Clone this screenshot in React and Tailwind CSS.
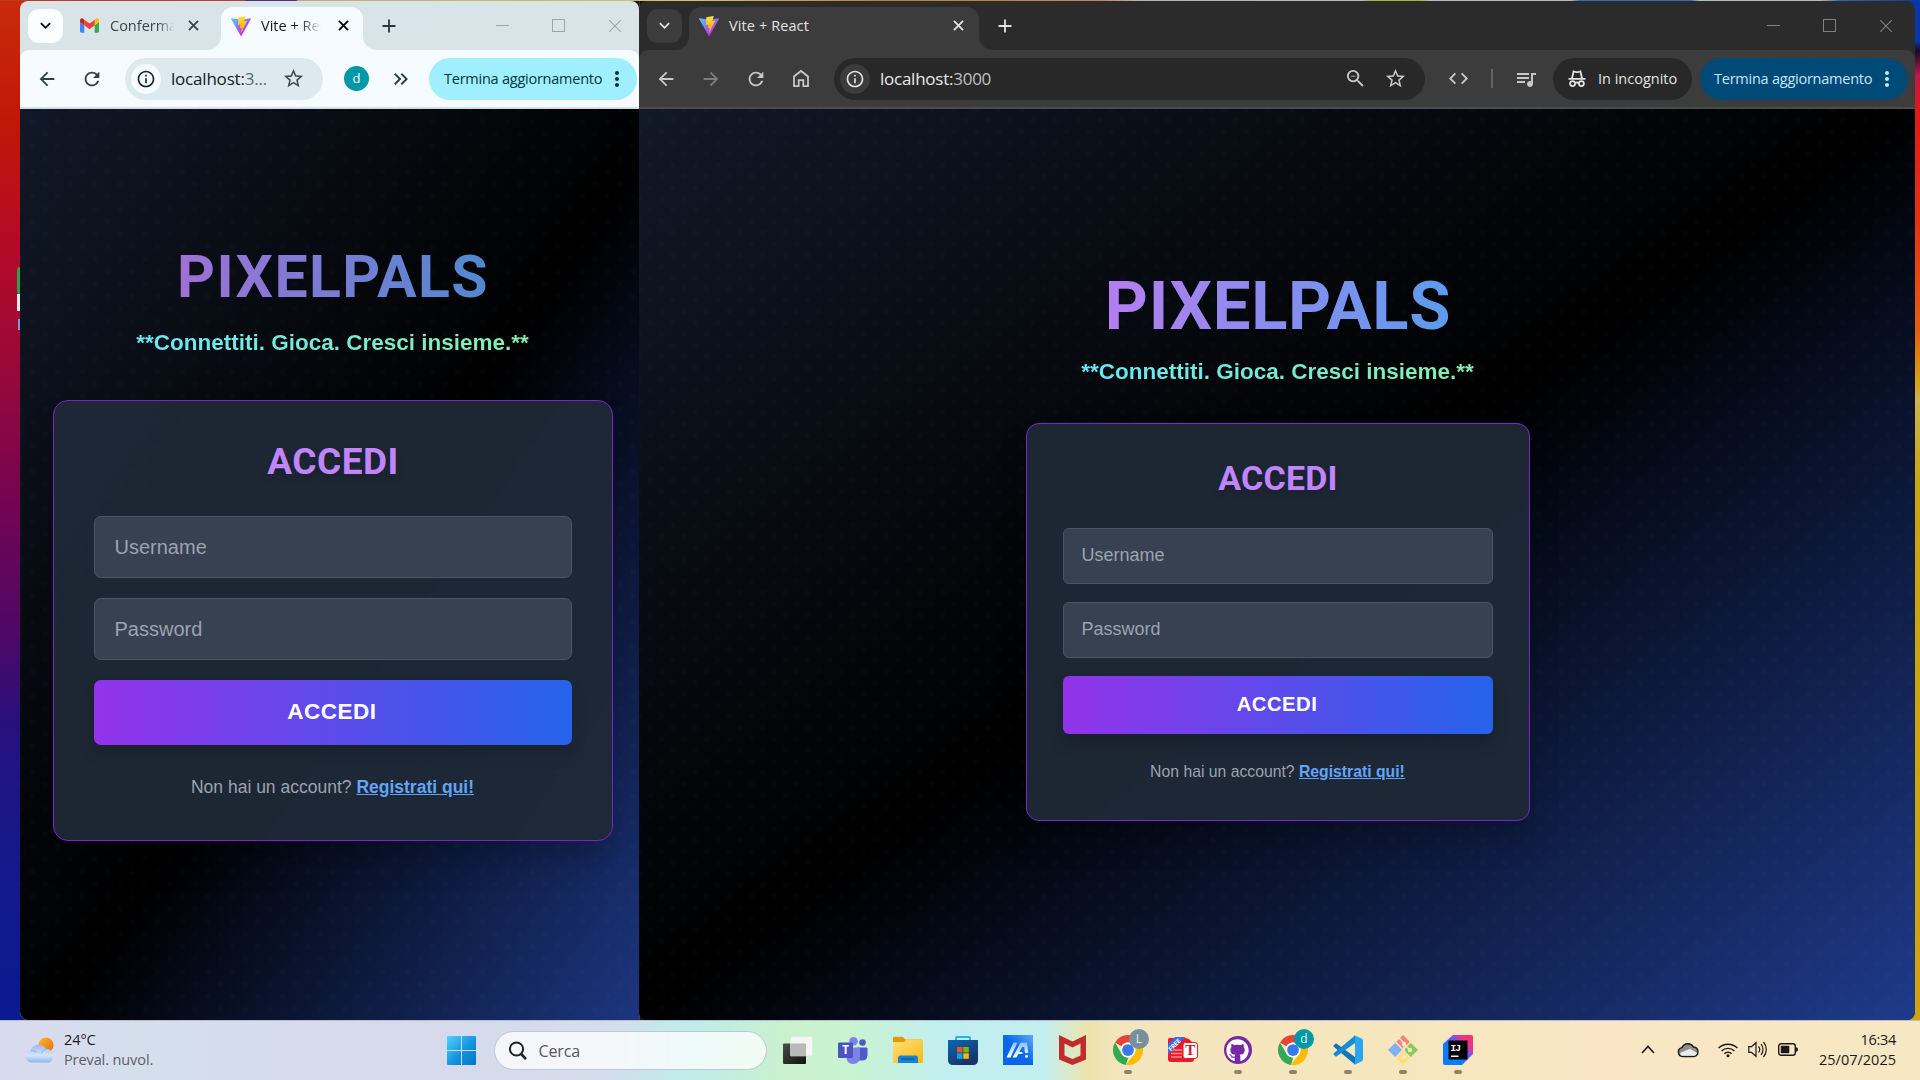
import React from "react";
import {
  MdArrowBack,
  MdArrowForward,
  MdRefresh,
  MdStarBorder,
  MdInfoOutline,
  MdZoomOut,
  MdCode,
  MdQueueMusic,
  MdKeyboardArrowDown,
  MdKeyboardDoubleArrowRight,
  MdMoreVert,
} from "react-icons/md";
import { FaGithub } from "react-icons/fa";

const ui = "font-['Open_Sans','Noto_Sans',sans-serif]";

/* ---------- small helpers ---------- */

function Slot({ className = "", children }) {
  return (
    <span className={`flex shrink-0 items-center justify-center ${className}`}>
      {children}
    </span>
  );
}

function Cross({ size = 11, width = 2 }) {
  return (
    <svg className="shrink-0" width={size} height={size} viewBox="0 0 12 12" fill="none" stroke="currentColor" strokeWidth={width}>
      <path d="M1 1L11 11M11 1L1 11" />
    </svg>
  );
}

function Plus() {
  return (
    <svg className="shrink-0" width="14" height="14" viewBox="0 0 14 14" stroke="currentColor" strokeWidth="1.8">
      <path d="M7 0.5V13.5M0.5 7H13.5" />
    </svg>
  );
}

function ViteLogo() {
  return (
    <svg className="shrink-0" width="20" height="20" viewBox="0 0 256 257">
      <defs>
        <linearGradient id="viteA" x1="-1%" x2="58%" y1="8%" y2="79%">
          <stop offset="0%" stopColor="#41D1FF" />
          <stop offset="100%" stopColor="#BD34FE" />
        </linearGradient>
        <linearGradient id="viteB" x1="43%" x2="50%" y1="2%" y2="89%">
          <stop offset="0%" stopColor="#FFEA83" />
          <stop offset="8%" stopColor="#FFDD35" />
          <stop offset="100%" stopColor="#FFA800" />
        </linearGradient>
      </defs>
      <path fill="url(#viteA)" d="M255.2 37.9L134.9 252.9c-2.5 4.4-8.8 4.5-11.3 0L.9 37.9c-2.7-4.8 1.4-10.6 6.8-9.7l120.4 21.5c.8.1 1.5.1 2.3 0l117.9-21.5c5.4-1 9.6 4.8 6.9 9.7z" />
      <path fill="url(#viteB)" d="M185.4 0L96.4 17.5c-1.4.3-2.5 1.5-2.6 3L88.4 113c-.1 2.2 1.9 3.9 4 3.4l24.8-5.7c2.3-.5 4.4 1.5 3.9 3.8l-7.4 36c-.5 2.4 1.8 4.5 4.2 3.8l15.3-4.7c2.4-.7 4.6 1.4 4.1 3.8l-11.7 56.6c-.7 3.5 4 5.5 5.9 2.5l1.3-2 72.5-144.7c1.2-2.4-.9-5.2-3.5-4.7l-25.5 4.9c-2.4.5-4.4-1.8-3.8-4.1l16.6-57.7c.7-2.3-1.4-4.6-3.7-4.1z" />
    </svg>
  );
}

function GmailLogo() {
  return (
    <svg className="shrink-0" width="19" height="15" viewBox="52 42 88 66">
      <path fill="#4285f4" d="M58 108h14V74L52 59v43c0 3.32 2.69 6 6 6" />
      <path fill="#34a853" d="M120 108h14c3.32 0 6-2.69 6-6V59l-20 15" />
      <path fill="#fbbc04" d="M120 48v26l20-15v-8c0-7.42-8.47-11.65-14.4-7.2" />
      <path fill="#ea4335" d="M72 74V48l24 18 24-18v26L96 92" />
      <path fill="#c5221f" d="M52 51v8l20 15V48l-5.6-4.2c-5.94-4.45-14.4-.22-14.4 7.2" />
    </svg>
  );
}

function WindowButtons({ gapClass }) {
  return (
    <div className={`flex items-center opacity-80 ${gapClass}`}>
      <span className="block h-px w-[13px] bg-current" />
      <span className="block size-[13px] border border-current" />
      <Cross size={14} width={0.9} />
    </div>
  );
}

/* Concave corner at the foot of the active tab. */
function TabFoot({ side, dark }) {
  const fill = dark ? "#3c3c3c" : "#f5fbfe";
  return (
    <svg
      className={`absolute bottom-0 ${side === "left" ? "-left-[14px]" : "-right-[14px]"}`}
      width="14"
      height="14"
      viewBox="0 0 14 14"
    >
      {side === "left" ? (
        <path fill={fill} d="M14 0V14H0A14 14 0 0 0 14 0Z" />
      ) : (
        <path fill={fill} d="M0 0V14H14A14 14 0 0 1 0 0Z" />
      )}
    </svg>
  );
}

function Incognito() {
  return (
    <svg className="shrink-0" width="20" height="20" viewBox="0 0 20 20" fill="none" stroke="currentColor" strokeWidth="1.8">
      <path d="M1.5 9.8H18.5" />
      <path d="M5 9.5L6.6 2.4L8.6 3Q10 3.4 11.4 3L13.4 2.4L15 9.5" />
      <circle cx="5.6" cy="14.6" r="2.5" />
      <circle cx="14.4" cy="14.6" r="2.5" />
      <path d="M8 14Q10 13 12 14" />
    </svg>
  );
}

function HomeIcon() {
  return (
    <svg className="shrink-0" width="18" height="19" viewBox="0 0 18 19" fill="none" stroke="currentColor" strokeWidth="1.8">
      <path d="M2 7.5L9 2L16 7.5V17.2H11.3V11.2H6.7V17.2H2Z" />
    </svg>
  );
}

/* ---------- PixelPals page ---------- */

const FIELD =
  "flex items-center border border-[#4b5563] bg-[#374151] pb-px text-[#9ca3af]";

function Page({ small, children }) {
  return (
    <div
      className={`relative flex-1 bg-linear-to-br/srgb from-[#111827] via-black font-['Liberation_Sans',Arial,sans-serif] ${
        small ? "via-53% to-[#1e3a8a] to-104%" : "to-[#1e3a8a]"
      }`}
    >
      <div
        className={`h-full bg-[radial-gradient(circle,rgba(255,255,255,0.012)_2.5px,transparent_3.5px),radial-gradient(circle,rgba(255,255,255,0.012)_2.5px,transparent_3.5px)] ${
          small
            ? "bg-size-[25px_25px] bg-position-[0_0,12.5px_12.5px]"
            : "bg-size-[22.5px_22.5px] bg-position-[0_0,11.25px_11.25px]"
        }`}
      >
        {children}
      </div>
    </div>
  );
}

function LeftPage() {
  return (
    <Page small>
      <div className="flex flex-col items-center pt-[131px] pl-[7px]">
        <h1 className="h-[74px] bg-linear-to-r/srgb from-[#c084fc] to-[#60a5fa] bg-clip-text px-1 font-['Roboto',sans-serif] text-[59px] leading-[74px] font-bold tracking-[1.4px] text-transparent opacity-83">
          PIXELPALS
        </h1>
        <p className="mt-[11px] mr-px bg-linear-to-r/srgb from-[#67e8f9] to-[#86efac] bg-clip-text text-[22.5px] leading-[35px] font-bold whitespace-nowrap text-transparent">
          **Connettiti. Gioca. Cresci insieme.**
        </p>
        <div className="mt-10 flex h-[441px] w-[560px] flex-col rounded-[15px] border border-[#7e22ce] bg-[#1f2937]/95 px-[40px] pt-[38px] shadow-[0_20px_30px_rgba(0,0,0,0.2)]">
          <h2 className="h-[46px] text-center font-['Roboto',sans-serif] text-[37px] leading-[46px] font-bold tracking-[0.5px] text-[#c084fc] [text-shadow:0_4px_6px_rgba(0,0,0,0.2)]">
            ACCEDI
          </h2>
          <div className={`mt-[31px] h-[62px] rounded-[7px] pl-[19.5px] text-[20px] ${FIELD}`}>Username</div>
          <div className={`mt-[20px] h-[62px] rounded-[7px] pl-[19.5px] text-[20px] ${FIELD}`}>Password</div>
          <button className="mt-[20px] h-[65px] rounded-[7px] bg-linear-to-r/srgb from-[#9333ea] to-[#2563eb] pr-[2px] pb-[2px] text-[22.5px] font-bold tracking-[0.5px] text-white shadow-[0_10px_15px_rgba(0,0,0,0.15)]">
            ACCEDI
          </button>
          <p className="mt-[30px] mr-px text-center text-[17.5px] leading-[25px] text-[#9ca3af]">
            Non hai un account?{" "}
            <a className="font-bold text-[#60a5fa] underline">Registrati qui!</a>
          </p>
        </div>
      </div>
    </Page>
  );
}

function RightPage() {
  return (
    <Page>
      <div className="flex flex-col items-center pt-[155px] pl-[2px]">
        <h1 className="h-[84px] bg-linear-to-r/srgb from-[#c084fc] to-[#60a5fa] bg-clip-text px-1 font-['Roboto',sans-serif] text-[67px] leading-[84px] font-bold tracking-[0.7px] text-transparent opacity-95">
          PIXELPALS
        </h1>
        <p className="mt-[6px] mr-px bg-linear-to-r/srgb from-[#67e8f9] to-[#86efac] bg-clip-text text-[22.5px] leading-[35px] font-bold whitespace-nowrap text-transparent">
          **Connettiti. Gioca. Cresci insieme.**
        </p>
        <div className="mt-[34px] flex h-[398px] w-[504px] flex-col rounded-[13px] border border-[#7e22ce] bg-[#1f2937]/95 px-[36px] pt-[34px] shadow-[0_20px_30px_rgba(0,0,0,0.2)]">
          <h2 className="h-[41px] text-center font-['Roboto',sans-serif] text-[34px] leading-[41px] font-bold tracking-[0.2px] text-[#c084fc] [text-shadow:0_4px_6px_rgba(0,0,0,0.2)]">
            ACCEDI
          </h2>
          <div className={`mt-[29px] h-[56px] rounded-[6px] px-[17.5px] text-[18px] ${FIELD}`}>Username</div>
          <div className={`mt-[18px] h-[56px] rounded-[6px] px-[17.5px] text-[18px] ${FIELD}`}>Password</div>
          <button className="mt-[18px] h-[58px] rounded-[6px] bg-linear-to-r/srgb from-[#9333ea] to-[#2563eb] pr-[2px] pb-[2px] text-[20.25px] font-bold tracking-[0.5px] text-white shadow-[0_10px_15px_rgba(0,0,0,0.2)]">
            ACCEDI
          </button>
          <p className="mt-[27px] mr-px text-center text-[15.75px] leading-[22px] text-[#9ca3af]">
            Non hai un account?{" "}
            <a className="font-bold text-[#60a5fa] underline">Registrati qui!</a>
          </p>
        </div>
      </div>
    </Page>
  );
}

/* ---------- browser windows ---------- */

function LeftWindow() {
  return (
    <section className={`flex w-[619px] shrink-0 flex-col overflow-hidden rounded-t-[8px] rounded-bl-[8px] bg-[#d8e4e8] ${ui}`}>
      <div className="flex h-[49px] shrink-0 items-center pl-[8px] text-[15px] text-[#33474d]">
        <Slot className="h-[34px] w-[35px] rounded-[11px] bg-[#fafeff] text-black">
          <MdKeyboardArrowDown size={21} />
        </Slot>
        <Slot className="ml-[17px]"><GmailLogo /></Slot>
        <span className="ml-[11px] w-[64px] overflow-hidden mask-r-from-75% text-[14.5px] whitespace-nowrap">Conferma</span>
        <Slot className="ml-[14px] w-[11px]"><Cross /></Slot>
        <div className="relative ml-[22px] flex h-[43px] w-[142px] items-center self-end rounded-t-[12px] bg-[#f5fbfe] pb-[6px] pl-[10px] text-[#101c20]">
          <TabFoot side="left" />
          <ViteLogo />
          <span className="ml-[10px] w-[60px] overflow-hidden mask-r-from-65% text-[14.5px] whitespace-nowrap">Vite + React</span>
          <Slot className="ml-[17px] w-[11px] text-black"><Cross /></Slot>
          <TabFoot side="right" />
        </div>
        <Slot className="ml-[19px] text-[#26373c]"><Plus /></Slot>
        <div className="ml-[100px] text-[#8c989c]"><WindowButtons gapClass="gap-[43px]" /></div>
      </div>
      <div className="flex h-[59px] shrink-0 items-center rounded-t-[9px] border-b-2 border-[#d3dfe3] bg-[#f5fbfe] pl-[19px] text-[#2d4248]">
        <Slot className="w-4"><MdArrowBack size={22} className="shrink-0" /></Slot>
        <Slot className="ml-[29px] w-4"><MdRefresh size={22} className="shrink-0" /></Slot>
        <div className="ml-[25px] flex h-[42px] w-[198px] shrink-0 items-center rounded-full bg-[#dceaef] pl-[6px]">
          <Slot className="size-[30px] rounded-full bg-[#f5fbfe] text-[#15262b]"><MdInfoOutline size={20} /></Slot>
          <span className="ml-[10px] w-[101px] text-[17px] tracking-[-0.2px] whitespace-nowrap text-[#101c20]">
            localhost:<span className="text-[#5a6a6e]">3...</span>
          </span>
          <Slot className="ml-[12px] w-[19px] text-[#3e4a4e]"><MdStarBorder size={23} className="shrink-0" /></Slot>
        </div>
        <Slot className="ml-[21px] size-[25px] rounded-full bg-[#0097a7] text-[13px] text-white">d</Slot>
        <Slot className="ml-[24px] w-4"><MdKeyboardDoubleArrowRight size={24} className="shrink-0" /></Slot>
        <div className="ml-[20px] flex h-[42px] w-[208px] shrink-0 items-center rounded-full bg-[#a0efff] pl-[15px] text-[#00363f]">
          <span className="w-[158px] text-[14.5px] tracking-[-0.24px] whitespace-nowrap">Termina aggiornamento</span>
          <Slot className="ml-[7px] w-4"><MdMoreVert size={24} className="shrink-0" /></Slot>
        </div>
      </div>
      <LeftPage />
    </section>
  );
}

function RightWindow() {
  return (
    <section className={`flex w-[1276px] shrink-0 flex-col overflow-hidden rounded-[8px] bg-[#2b2b2b] ${ui}`}>
      <div className="flex h-[49px] shrink-0 items-center pl-[8px] text-[#e3e3e3]">
        <Slot className="h-[34px] w-[35px] rounded-[11px] bg-[#3c3c3c]">
          <MdKeyboardArrowDown size={21} />
        </Slot>
        <div className="relative ml-[7px] flex h-[43px] w-[290px] items-center self-end rounded-t-[12px] bg-[#3c3c3c] pb-[6px] pl-[10px]">
          <TabFoot side="left" dark />
          <ViteLogo />
          <span className="ml-[10px] text-[14.5px] tracking-[0.1px] whitespace-nowrap">Vite + React</span>
          <Slot className="mr-[15px] ml-auto w-[11px]"><Cross /></Slot>
          <TabFoot side="right" dark />
        </div>
        <Slot className="ml-[19px]"><Plus /></Slot>
        <div className="mr-[22px] ml-auto text-[#9a9a9a]"><WindowButtons gapClass="gap-[43px]" /></div>
      </div>
      <div className="flex h-[59px] shrink-0 items-center rounded-t-[9px] border-b-2 border-[#4b4d4b] bg-[#3c3c3c] pl-[19px] text-[#c7c7c7]">
        <Slot className="w-4"><MdArrowBack size={22} className="shrink-0" /></Slot>
        <Slot className="ml-[29px] w-4 text-[#7d7d7d]"><MdArrowForward size={22} className="shrink-0" /></Slot>
        <Slot className="ml-[29px] w-4"><MdRefresh size={22} className="shrink-0" /></Slot>
        <Slot className="ml-[29px] w-4"><HomeIcon /></Slot>
        <div className="ml-[25px] flex h-[42px] w-[591px] shrink-0 items-center rounded-full bg-[#282828] pl-[6px]">
          <Slot className="size-[30px] rounded-full bg-[#3c3c3c] text-[#e3e3e3]"><MdInfoOutline size={20} /></Slot>
          <span className="ml-[10px] text-[17px] tracking-[-0.25px] whitespace-nowrap text-[#e8e8e8]">
            localhost:<span className="text-[#c0c0c0]">3000</span>
          </span>
          <Slot className="ml-auto w-5"><MdZoomOut size={23} className="shrink-0" /></Slot>
          <Slot className="mr-5 ml-5 w-5"><MdStarBorder size={23} className="shrink-0" /></Slot>
        </div>
        <Slot className="ml-[23px] w-5"><MdCode size={23} className="shrink-0" /></Slot>
        <span className="ml-[23px] h-[19px] w-[2px] bg-[#636363]" />
        <Slot className="ml-[23px] w-5"><MdQueueMusic size={24} className="shrink-0" /></Slot>
        <div className="ml-[17px] flex h-[42px] w-[139px] shrink-0 items-center rounded-full bg-[#282828] pl-[14px] text-[#e3e3e3]">
          <Incognito />
          <span className="ml-[11px] text-[14.5px] whitespace-nowrap">In incognito</span>
        </div>
        <div className="ml-2 flex h-[42px] w-[208px] shrink-0 items-center rounded-full bg-[#004a77] pl-[14px] text-[#c2e7ff]">
          <span className="w-[158px] text-[14.5px] tracking-[-0.24px] whitespace-nowrap">Termina aggiornamento</span>
          <Slot className="ml-[7px] w-4"><MdMoreVert size={24} className="shrink-0" /></Slot>
        </div>
      </div>
      <RightPage />
    </section>
  );
}

/* ---------- taskbar ---------- */

function WeatherIcon() {
  return (
    <svg className="shrink-0" width="32" height="28" viewBox="0 0 32 28">
      <defs>
        <linearGradient id="sun" x1="0" x2="1" y1="0" y2="1">
          <stop offset="0" stopColor="#f8b830" />
          <stop offset="1" stopColor="#f06a10" />
        </linearGradient>
        <linearGradient id="cloud" x1="0" x2="0" y1="0" y2="1">
          <stop offset="0" stopColor="#9db9ee" />
          <stop offset="0.6" stopColor="#d3e5fb" />
          <stop offset="1" stopColor="#8fb2ee" />
        </linearGradient>
      </defs>
      <circle cx="22" cy="9" r="7.6" fill="url(#sun)" />
      <path fill="url(#cloud)" d="M7 26.5A6 6 0 0 1 6.5 14.7A8.5 8.5 0 0 1 22 13A7 7 0 0 1 25 26.5Z" />
      <path fill="none" stroke="#8fb0ea" strokeWidth="1" d="M6.5 14.7Q10 14 12.5 16M17.5 17.5Q18.5 13.3 23 12.8" />
    </svg>
  );
}

function StartIcon() {
  return (
    <svg className="shrink-0" width="29" height="29" viewBox="0 0 29 29">
      <defs>
        <linearGradient id="start" gradientUnits="userSpaceOnUse" x1="0" y1="0" x2="29" y2="29">
          <stop offset="0" stopColor="#4fd3fb" />
          <stop offset="0.55" stopColor="#1393de" />
          <stop offset="1" stopColor="#0573cf" />
        </linearGradient>
      </defs>
      <path fill="url(#start)" d="M1 0H14V14H0V1Q0 0 1 0ZM15 0H28Q29 0 29 1V14H15ZM0 15H14V29H1Q0 29 0 28ZM15 15H29V28Q29 29 28 29H15Z" />
    </svg>
  );
}

function TaskViewIcon() {
  return (
    <svg width="30" height="28" viewBox="0 0 30 28">
      <defs>
        <linearGradient id="tv" x1="0" y1="0" x2="1" y2="1">
          <stop offset="0" stopColor="#4a4a48" />
          <stop offset="1" stopColor="#111" />
        </linearGradient>
      </defs>
      <rect x="0" y="7.5" width="23" height="20.5" rx="1" fill="url(#tv)" />
      <rect x="7.5" y="0.5" width="22" height="19.5" rx="1" fill="#f4f6f4" stroke="#dfe5df" strokeWidth="0.6" />
      <rect x="7.5" y="7.5" width="15.5" height="12.5" fill="#b9bab8" />
    </svg>
  );
}

function TeamsIcon() {
  return (
    <svg width="30" height="27" viewBox="0 0 30 27">
      <circle cx="24.5" cy="5.5" r="3.3" fill="#5059c9" />
      <path fill="#5059c9" d="M19 10.5H28.5Q29.5 10.5 29.5 11.5V18Q29.5 23.5 24 23.5H19Z" />
      <circle cx="15.5" cy="4.3" r="4.3" fill="#7b83eb" />
      <path fill="#7b83eb" d="M8 10.5H21Q22 10.5 22 11.5V19Q22 27 15 27Q8.5 27 8.5 20Z" />
      <rect x="0" y="5.5" width="15" height="15.5" rx="1.3" fill="#4b53bc" />
      <text x="7.5" y="17.3" textAnchor="middle" fill="#fff" fontFamily="Open Sans, sans-serif" fontWeight="700" fontSize="11.5">T</text>
    </svg>
  );
}

function FolderIcon() {
  return (
    <svg width="30" height="28" viewBox="0 0 30 28">
      <defs>
        <linearGradient id="fold" x1="0" y1="0" x2="1" y2="1">
          <stop offset="0" stopColor="#ffe07a" />
          <stop offset="1" stopColor="#fdb813" />
        </linearGradient>
      </defs>
      <path fill="#e09a0c" d="M0 2Q0 .8 1.2 .8H9.5L12.5 3.5H28V10H0Z" />
      <path fill="url(#fold)" d="M0 6H11L13.5 3.5H28.5Q30 3.5 30 5V26Q30 27 29 27H1Q0 27 0 26Z" />
      <path fill="#1583d6" d="M5 27V22Q5 19.5 7.5 19.5H22.5Q25 19.5 25 22V27Z" />
      <rect x="8.5" y="22.5" width="13" height="1.2" fill="#0a4f94" />
    </svg>
  );
}

function StoreIcon() {
  return (
    <svg width="30" height="30" viewBox="0 0 30 30">
      <defs>
        <linearGradient id="store" x1="0" y1="0" x2="0.6" y2="1">
          <stop offset="0" stopColor="#0b68b5" />
          <stop offset="1" stopColor="#1b3263" />
        </linearGradient>
      </defs>
      <path fill="none" stroke="#22b4ee" strokeWidth="2" d="M8 7V3Q8 2 9 2H21Q22 2 22 3V7" />
      <path fill="url(#store)" d="M0 5H30V25Q30 30 25 30H5Q0 30 0 25Z" />
      <rect x="9" y="12" width="5.5" height="5.5" fill="#f25022" />
      <rect x="15.3" y="12" width="5.5" height="5.5" fill="#7fba00" />
      <rect x="9" y="18.3" width="5.5" height="5.5" fill="#00a4ef" />
      <rect x="15.3" y="18.3" width="5.5" height="5.5" fill="#ffb900" />
    </svg>
  );
}

function AsusIcon() {
  return (
    <svg width="30" height="30" viewBox="0 0 30 30">
      <defs>
        <linearGradient id="asus" x1="0" y1="1" x2="1" y2="0">
          <stop offset="0.5" stopColor="#0668e8" />
          <stop offset="1" stopColor="#5fa8fa" />
        </linearGradient>
        <linearGradient id="asusInk" x1="0" y1="1" x2="0" y2="0">
          <stop offset="0" stopColor="#fff" />
          <stop offset="1" stopColor="#8fbdf9" />
        </linearGradient>
      </defs>
      <rect width="30" height="30" fill="url(#asus)" />
      <path fill="url(#asusInk)" d="M3.5 22.5L10.5 7.5H14.5L7.5 22.5ZM9.5 22.5L17.5 7.5H24L25.3 18H22L21.3 12H19L13.5 22.5Z" />
      <path stroke="#e8f2ff" strokeWidth="2" d="M14.5 18H19.5" />
      <circle cx="23.5" cy="21.3" r="1.5" fill="#fff" />
    </svg>
  );
}

function McAfeeIcon() {
  return (
    <svg width="27" height="30" viewBox="0 0 27 30">
      <path fill="#c02b2c" fillRule="evenodd" d="M0 0L13.5 6.5L27 0V24.5L13.5 30L0 24.5ZM5.5 8.5V20.5L13.5 24L21.5 20.5V8.5L13.5 12.5Z" />
    </svg>
  );
}

function ChromeIcon() {
  return (
    <svg width="30" height="30" viewBox="0 0 48 48">
      <path fill="#ea4335" d="M24 0A24 24 0 0 1 44.8 12H24A12 12 0 0 0 13.6 18L3.2 12A24 24 0 0 1 24 0Z" />
      <path fill="#34a853" d="M3.2 12L13.6 30A12 12 0 0 0 24 36H24.5L20.6 47.8A24 24 0 0 1 3.2 12Z" />
      <path fill="#fbbc04" d="M44.8 12A24 24 0 0 1 20.6 47.8L34.4 30A12 12 0 0 0 34.4 18L31 12Z" />
      <circle cx="24" cy="24" r="12" fill="#fff" />
      <circle cx="24" cy="24" r="9.4" fill="#3b78e7" />
    </svg>
  );
}

function FreePdfIcon() {
  return (
    <svg width="30" height="26" viewBox="0 0 30 26">
      <path fill="#e8192b" d="M1.5 1H17Q20 1 22 3L26 7V22Q26 25 23 25H3Q0 25 0 22V2.5Q0 1 1.5 1Z" />
      <path stroke="#f78e94" strokeWidth="1.3" d="M3 13H14M3 16.5H14M3 20H14" />
      <path fill="#3f66e8" d="M0 7V17.5L17.5 0H7Z" />
      <text x="0" y="0" transform="translate(3 14.5) rotate(-45)" fill="#fff" fontFamily="Roboto, sans-serif" fontWeight="700" fontSize="6.2">FREE</text>
      <rect x="15" y="5.5" width="14.5" height="16" rx="2.5" fill="#fff" stroke="#e8192b" />
      <text x="22.3" y="18.3" textAnchor="middle" fill="#d91526" fontFamily="Liberation Serif, serif" fontWeight="700" fontSize="15">T</text>
    </svg>
  );
}

function GithubIcon() {
  return (
    <span className="flex size-[28px] items-center justify-center rounded-full bg-[#7728a6] text-white">
      <FaGithub size={23} />
    </span>
  );
}

function VsCodeIcon() {
  return (
    <svg width="30" height="30" viewBox="0 0 30 30">
      <path fill="#0f76bd" d="M0.5 10.5L3 8.2L22 22V29.5L0.7 11.8Z" />
      <path fill="#1a8ad2" d="M0.5 19.5L3 21.8L22 8V0.5L0.7 18.2Z" />
      <path fill="#2aa6ef" d="M21 0L28.5 3.4Q30 4.2 30 6V24Q30 25.8 28.5 26.6L21 30Q22 29 22 27.5V2.5Q22 1 21 0Z" />
    </svg>
  );
}

function GitIcon() {
  return (
    <svg width="30" height="30" viewBox="0 0 30 30">
      <path fill="#f4807d" d="M15 0L21.7 6.7L15 13.4L8.3 6.7Z" />
      <path fill="#7fb0f8" d="M7.3 7.7L14 14.7L7.3 22L0 14.9Z" />
      <path fill="#86cb5c" d="M22.7 7.7L30 14.9L22.7 22L15.8 14.9Z" />
      <path fill="#fbe07a" d="M15 15.7L21.7 23L15 30L8.3 23Z" />
      <path fill="none" stroke="#f7e7bd" strokeWidth="1.6" d="M11 3L16 8V22M16 9L22 15" />
      <circle cx="16" cy="9" r="2.2" fill="#f7e7bd" />
      <circle cx="22" cy="15" r="2.2" fill="#f7e7bd" />
      <circle cx="16" cy="22" r="2.2" fill="#f7e7bd" />
    </svg>
  );
}

function IntelliJIcon() {
  return (
    <svg width="30" height="30" viewBox="0 0 30 30">
      <defs>
        <linearGradient id="ij" x1="0" y1="1" x2="1" y2="0">
          <stop offset="0.4" stopColor="#087cfa" />
          <stop offset="0.6" stopColor="#6b57ff" />
          <stop offset="0.75" stopColor="#e8358f" />
          <stop offset="1" stopColor="#fe315d" />
        </linearGradient>
      </defs>
      <path fill="url(#ij)" d="M10 0H28Q30 0 30 2V19L19 30H2Q0 30 0 28V9Z" />
      <rect x="5.5" y="5.5" width="19" height="19" fill="#000" />
      <text x="7.5" y="15.5" fill="#fff" fontFamily="Liberation Mono, monospace" fontWeight="700" fontSize="9.5" letterSpacing="-1">IJ</text>
      <rect x="8" y="20.5" width="7.5" height="1.5" fill="#fff" />
    </svg>
  );
}

const APPS = [
  { key: "taskview", icon: <TaskViewIcon /> },
  { key: "teams", icon: <TeamsIcon /> },
  { key: "folder", icon: <FolderIcon /> },
  { key: "store", icon: <StoreIcon /> },
  { key: "asus", icon: <AsusIcon /> },
  { key: "mcafee", icon: <McAfeeIcon /> },
  { key: "chrome-l", icon: <ChromeIcon />, open: true, badge: "L", badgeClass: "bg-[#78909c] text-[#e0e6e9]" },
  { key: "pdf", icon: <FreePdfIcon /> },
  { key: "github", icon: <GithubIcon />, open: true },
  { key: "chrome-d", icon: <ChromeIcon />, open: true, badge: "d", badgeClass: "bg-[#0097a7] text-[#e4f6f8]" },
  { key: "vscode", icon: <VsCodeIcon />, open: true },
  { key: "git", icon: <GitIcon />, open: true },
  { key: "intellij", icon: <IntelliJIcon />, open: true },
];

function AppButton({ icon, open, badge, badgeClass }) {
  return (
    <div className="relative flex h-[60px] w-[55px] shrink-0 items-center justify-center pb-px">
      {icon}
      {badge && (
        <span className={`absolute top-[8px] left-[29px] flex size-5 items-center justify-center rounded-full text-[12px] leading-none ${badgeClass}`}>
          {badge}
        </span>
      )}
      {open && <span className="absolute bottom-[7px] left-[23.5px] h-1 w-2 rounded-full bg-[#8d8468]" />}
    </div>
  );
}

function Tray() {
  return (
    <div className="flex h-full items-center pb-[2px] text-[#1c1a16]">
      <svg width="14" height="9" viewBox="0 0 14 9" fill="none" stroke="currentColor" strokeWidth="1.7"><path d="M1 8L7 1.5L13 8" /></svg>
      <svg className="ml-[22px]" width="22" height="16" viewBox="0 0 22 16">
        <path fill="#8f8f8f" stroke="currentColor" strokeWidth="1.4" d="M5.5 14.5A4.5 4.5 0 0 1 5 5.6A6.5 6.5 0 0 1 16.5 5A4.8 4.8 0 0 1 17 14.5Z" />
        <path fill="#ececec" d="M4 13.3Q2.5 12 3.5 10.8L13 6.8L20 11Q19.3 13.8 17 13.8H5.5Z" />
      </svg>
      <svg className="ml-[19px]" width="20" height="16" viewBox="0 0 20 16" fill="none" stroke="currentColor" strokeWidth="1.4">
        <path d="M0.6 6A13.5 13.5 0 0 1 19.4 6M3.6 9A9 9 0 0 1 16.4 9M6.4 11.8A5 5 0 0 1 13.6 11.8" />
        <circle cx="10" cy="13.7" r="1.5" fill="currentColor" stroke="none" />
      </svg>
      <svg className="ml-[10px]" width="20" height="17" viewBox="0 0 20 17" fill="none" stroke="currentColor" strokeWidth="1.2">
        <path d="M0.8 5.7H3.5L8 1.7V15.3L3.5 11.3H0.8ZM10.5 5.5A4.5 4.5 0 0 1 10.5 11.5M13 3.2A8 8 0 0 1 13 13.8M15.5 1A11.5 11.5 0 0 1 15.5 16" />
      </svg>
      <svg className="ml-[10px]" width="20" height="13" viewBox="0 0 20 13">
        <rect x="0.7" y="0.7" width="16.6" height="11.6" rx="2.5" fill="none" stroke="currentColor" strokeWidth="1.4" />
        <rect x="2.8" y="2.8" width="8.5" height="7.4" rx="0.8" fill="currentColor" />
        <path fill="currentColor" d="M18 4.3Q20 4.3 20 6.5Q20 8.7 18 8.7Z" />
      </svg>
      <div className="mr-[24px] ml-auto text-right text-[14.5px] leading-[20px]">
        <div className="tracking-[-0.3px]">16:34</div>
        <div>25/07/2025</div>
      </div>
    </div>
  );
}

function Taskbar() {
  return (
    <footer
      className={`flex h-[60px] shrink-0 items-center border-t border-[#b9bccb] bg-[linear-gradient(90deg,#d8daee_0px,#d5dfec_130px,#d6daec_400px,#d5dceb_600px,#bfecea_690px,#c9f1cd_790px,#c9f3d2_850px,#c1eef0_950px,#c4eeee_1045px,#ece4ac_1088px,#f3e5bf_1120px,#f6e6bd_1400px,#fae6c5_1600px,#f7e7c2_1920px)] ${ui}`}
    >
      <div className="flex w-[447px] shrink-0 items-center pb-[2px] pl-[24px]">
        <WeatherIcon />
        <div className="ml-[8px] text-[14.5px] leading-[20px] tracking-[-0.1px]">
          <div className="text-[#1b1b1f]">24°C</div>
          <div className="text-[#5c5d66]">Preval. nuvol.</div>
        </div>
      </div>
      <StartIcon />
      <div className="ml-[17.5px] flex h-[39px] w-[273.5px] shrink-0 items-center rounded-full border border-[#bcc8d4] bg-white/75 pl-[13px]">
        <svg width="20" height="20" viewBox="0 0 20 20" fill="none" stroke="#222" strokeWidth="2"><circle cx="8.5" cy="8" r="6.6" /><path strokeWidth="2.6" d="M13.2 13L18 18.2" /></svg>
        <span className="ml-[11px] text-[16px] tracking-[-0.1px] text-[#55565c]">Cerca</span>
      </div>
      <div className="ml-[3px] flex shrink-0">
        {APPS.map(({ key, ...app }) => (
          <AppButton key={key} {...app} />
        ))}
      </div>
      <div className="ml-auto h-full w-[279px] shrink-0"><Tray /></div>
    </footer>
  );
}

/* ---------- desktop ---------- */

export default function App() {
  return (
    <div className="flex h-[1080px] w-[1920px] flex-col overflow-hidden bg-[#141414]">
      <div className="h-px shrink-0 bg-[linear-gradient(90deg,#b83a20_0px,#b5442c_244px,#5b2a86_246px,#5b2a86_296px,#c0aa70_298px,#d6c070_700px,#c07c30_880px,#c08850_1100px,#b0b8b0_1140px,#b4bcbc_1360px,#9ab83c_1370px,#9ab83c_1420px,#b4bcbc_1430px,#b4bcbc_1570px,#2a70b4_1580px,#2a70b4_1690px,#b4bcbc_1700px,#b4bcbc_1820px,#2c6aa8_1840px,#1038a0_1920px)]" />
      <main className="flex min-h-0 flex-1 bg-[linear-gradient(90deg,#141414_50%,#c9a010_50%)]">
        <div className="relative -mr-2 flex w-[28px] shrink-0 flex-col items-end bg-[linear-gradient(180deg,#c82a0c_0px,#c01808_120px,#b30a28_250px,#90083f_400px,#740452_500px,#4c0868_640px,#28107c_720px,#15198a_850px,#0a1a90_1020px)]">
          <span className="mt-[266px] mr-[8px] h-[27px] w-[3px] rounded-l-full bg-[#2fa04a]" />
          <span className="mr-[8px] h-[17px] w-[3px] bg-[#e8e8ea]" />
          <span className="mt-[8px] mr-[8px] h-[11px] w-[2px] bg-[#7a9ad8]" />
        </div>
        <div className="relative flex shrink-0">
          <LeftWindow />
          <span className="-mr-px w-px shrink-0 bg-[#3a3d45]" />
          <RightWindow />
        </div>
        <div className="-ml-2 w-[13px] shrink-0 bg-[linear-gradient(180deg,#0838a8_0px,#0838a8_40px,#180c28_50px,#c01848_75px,#e01818_110px,#e83010_220px,#e06010_330px,#d8a010_380px,#d0b050_400px,#c8a410_480px,#cfa210_1020px)]" />
      </main>
      <Taskbar />
    </div>
  );
}
